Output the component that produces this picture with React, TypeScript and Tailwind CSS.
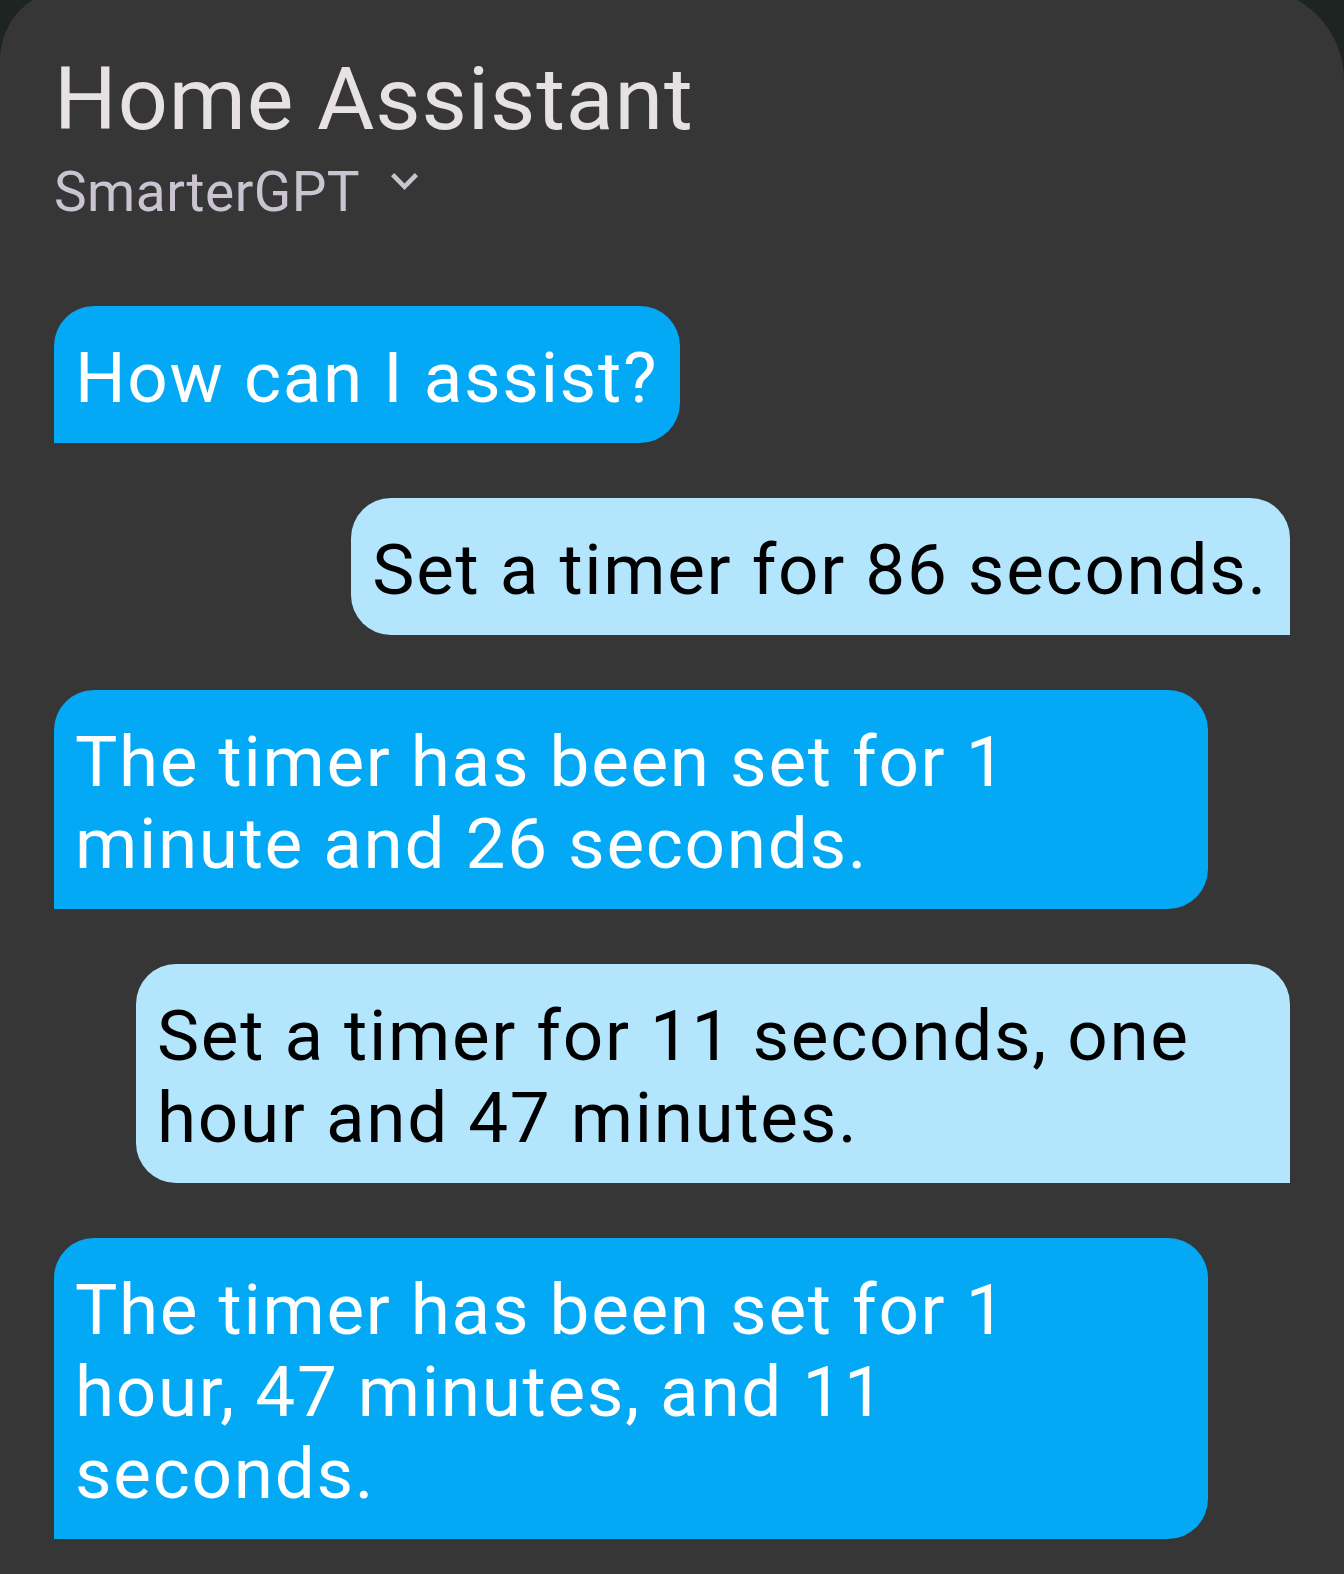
import React from "react";

type Msg = { from: "bot" | "user"; text: string };

const messages: Msg[] = [
  { from: "bot", text: "How can I assist?" },
  { from: "user", text: "Set a timer for 86 seconds." },
  { from: "bot", text: "The timer has been set for 1 minute and 26 seconds." },
  { from: "user", text: "Set a timer for 11 seconds, one hour and 47 minutes." },
  { from: "bot", text: "The timer has been set for 1 hour, 47 minutes, and 11 seconds." },
];

function Bubble({ m }: { m: Msg }) {
  if (m.from === "bot") {
    return (
      <div className="self-start max-w-[1154px] bg-[#03a9f4] text-white text-[71px] leading-[82px] tracking-[1.7px] pt-[31px] pb-[24px] pl-[21px] pr-[22px] rounded-tl-[40px] rounded-tr-[40px] rounded-br-[40px] rounded-bl-none">
        {m.text}
      </div>
    );
  }
  return (
    <div className="self-end max-w-[1154px] bg-[#b3e5fc] text-black text-[71px] leading-[82px] tracking-[1.7px] pt-[31px] pb-[24px] pl-[21px] pr-[22px] rounded-tl-[40px] rounded-tr-[40px] rounded-bl-[40px] rounded-br-none">
      {m.text}
    </div>
  );
}

export default function App() {
  return (
    <div
      className="w-[1344px] h-[1574px] overflow-hidden bg-[#1e2422]"
      style={{ fontFamily: "Roboto, 'Noto Sans', Arial, sans-serif" }}
    >
      <div className="-mt-[12px] h-[1586px] rounded-tl-[72px] rounded-tr-[92px] bg-[#363636] pt-[59px] px-[54px]">
        <div className="text-[88px] leading-[104px] tracking-[0.85px] text-[#e6e1e5]">Home Assistant</div>
        <div className="mt-[9px] flex items-start">
          <span className="text-[55px] leading-[64px] tracking-[0.45px] text-[#cac4d0]">SmarterGPT</span>
          <svg
            className="ml-[31px] mt-[13px]"
            width="27"
            height="17"
            viewBox="6 8.59 12 7.41"
            preserveAspectRatio="none"
            fill="#cac4d0"
          >
            <path d="M16.59 8.59L12 13.17 7.41 8.59 6 10l6 6 6-6z" />
          </svg>
        </div>
        <div className="mt-[82px] flex flex-col gap-[55px]">
          {messages.map((m, i) => (
            <Bubble key={i} m={m} />
          ))}
        </div>
      </div>
    </div>
  );
}
